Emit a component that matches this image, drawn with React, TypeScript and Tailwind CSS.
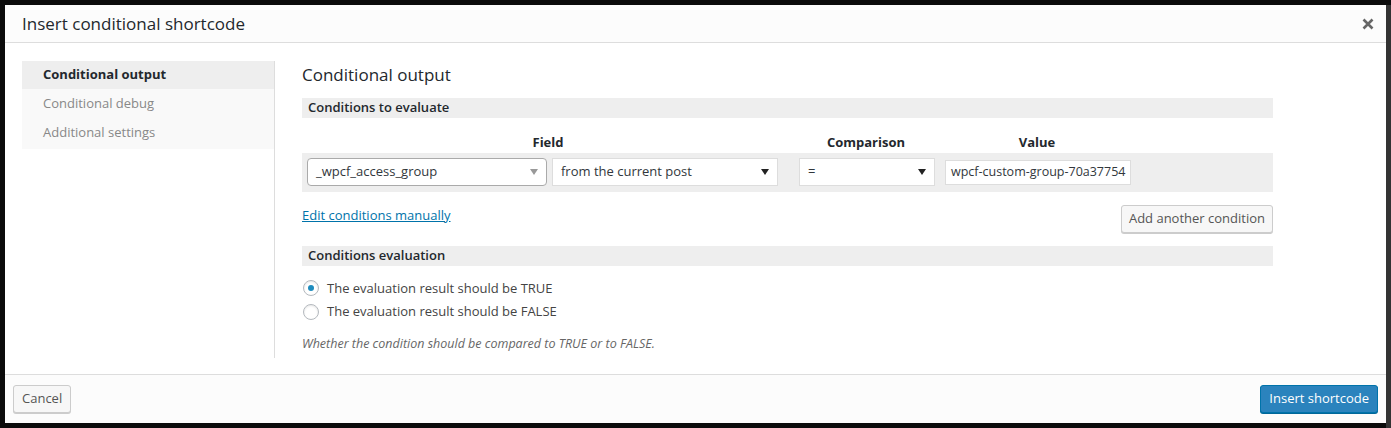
import React from "react";

const font = { fontFamily: '"Open Sans", "Noto Sans", sans-serif' };

function Caret({ color = "#222" }: { color?: string }) {
  return (
    <svg width="8" height="6" viewBox="0 0 8 6">
      <path d="M0 0 L8 0 L4 6 Z" fill={color} />
    </svg>
  );
}

function SelectBox({ label, width, rounded }: { label: string; width: string; rounded?: boolean }) {
  return (
    <div
      className={
        "flex h-[28px] items-center justify-between bg-white pl-[8px] pr-[8px] text-[13px] text-[#32373c] " +
        width +
        (rounded ? " rounded-[4px] border border-[#aaa]" : " border border-[#ddd]")
      }
    >
      <span className="whitespace-nowrap">{label}</span>
      <Caret color={rounded ? "#999" : "#222"} />
    </div>
  );
}

function SectionBar({ title }: { title: string }) {
  return (
    <div className="flex h-[20px] items-center bg-[#eee] px-[6px] text-[13px] font-semibold text-[#23282d]">
      {title}
    </div>
  );
}

function Radio({ checked, label }: { checked?: boolean; label: string }) {
  return (
    <label className="flex items-center gap-[8px] text-[13px] text-[#444]">
      <span className="flex h-[16px] w-[16px] items-center justify-center rounded-full border border-[#b4b9be] bg-white shadow-[inset_0_1px_2px_rgba(0,0,0,0.1)]">
        {checked && <span className="h-[6px] w-[6px] rounded-full bg-[#1e8cbe]" />}
      </span>
      {label}
    </label>
  );
}

export default function App() {
  const tabs = ["Conditional output", "Conditional debug", "Additional settings"];

  return (
    <div className="flex h-[428px] w-[1391px] bg-[#0b0b0b] pl-[5px] pt-[5px]" style={font}>
      <div className="flex h-[418px] w-[1381px] flex-col bg-white">
        {/* Header */}
        <div className="flex h-[38px] items-center justify-between border-b border-[#ddd] bg-[#fcfcfc] pl-[17px] pr-[12px]">
          <h1 className="text-[17px] text-[#23282d]">Insert conditional shortcode</h1>
          <svg width="12" height="12" viewBox="0 0 12 12">
            <path d="M1.5 1.5 L10.5 10.5 M10.5 1.5 L1.5 10.5" stroke="#666" strokeWidth="2.6" />
          </svg>
        </div>

        {/* Body */}
        <div className="flex flex-1 pl-[17px] pt-[18px]">
          <div className="w-[252px]">
            <ul className="bg-[#f9f9f9] pb-[2px]">
              {tabs.map((t, i) => (
                <li
                  key={t}
                  className={
                    "flex items-center pl-[21px] text-[13px] " +
                    (i === 0 ? "h-[28px] bg-[#eee] font-bold text-[#23282d]" : "h-[29px] text-[#888]")
                  }
                >
                  {t}
                </li>
              ))}
            </ul>
          </div>
          <div className="mb-[16px] w-px bg-[#ddd]" />
          <div className="w-[998px] pl-[27px] pt-[1px]">
            <h2 className="text-[17px] text-[#23282d]">Conditional output</h2>
            <div className="mt-[10px]">
              <SectionBar title="Conditions to evaluate" />
            </div>

            <div className="mt-[16px] flex h-[18px] items-center text-[13px] font-bold text-[#23282d]">
              <div className="w-[492px] text-center">Field</div>
              <div className="ml-[4px] w-[136px] text-center">Comparison</div>
              <div className="ml-[10px] w-[186px] text-center">Value</div>
            </div>

            <div className="mt-[1px] flex h-[39px] items-center gap-[5px] bg-[#eee] pl-[5px]">
              <SelectBox label="_wpcf_access_group" width="w-[240px]" rounded />
              <SelectBox label="from the current post" width="w-[226px]" />
              <div className="ml-[16px]">
                <SelectBox label="=" width="w-[136px]" />
              </div>
              <div className="ml-[5px] flex h-[25px] w-[186px] items-center overflow-hidden whitespace-nowrap border border-[#ddd] bg-white pl-[5px] text-[12.5px] text-[#32373c]">
                wpcf-custom-group-70a37754
              </div>
            </div>

            <div className="mt-[13px] flex items-start justify-between">
              <a className="mt-[1px] text-[13px] text-[#0073aa] underline">Edit conditions manually</a>
              <button className="h-[28px] rounded-[3px] border border-[#ccc] bg-[#f7f7f7] px-[7px] text-[13px] text-[#555] shadow-[0_1px_0_#ccc]">
                Add another condition
              </button>
            </div>

            <div className="mt-[13px]">
              <SectionBar title="Conditions evaluation" />
            </div>

            <div className="mt-[13px] flex flex-col gap-[4px] pl-[1px]">
              <Radio checked label="The evaluation result should be TRUE" />
              <Radio label="The evaluation result should be FALSE" />
            </div>
            <p className="mt-[13px] text-[12.5px] italic text-[#666]">
              Whether the condition should be compared to TRUE or to FALSE.
            </p>
          </div>
        </div>

        {/* Footer */}
        <div className="flex h-[49px] items-center justify-between border-t border-[#ddd] bg-[#fcfcfc] px-[8px]">
          <button className="h-[28px] rounded-[3px] border border-[#ccc] bg-[#f7f7f7] px-[8px] text-[13px] text-[#555] shadow-[0_1px_0_#ccc]">
            Cancel
          </button>
          <button className="h-[28px] rounded-[3px] border border-[#0073aa] bg-[#2b83bd] px-[8px] text-[13px] text-white shadow-[0_1px_0_#006799]">
            Insert shortcode
          </button>
        </div>
      </div>
      <div className="h-full flex-1 bg-[#333]" />
    </div>
  );
}
